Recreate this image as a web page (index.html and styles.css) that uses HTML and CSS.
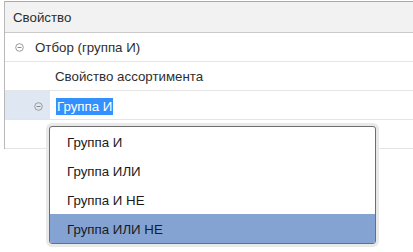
FILE: index.html
```html
<!DOCTYPE html>
<html lang="ru">
<head>
<meta charset="utf-8">
<link rel="stylesheet" href="styles.css">
</head>
<body>
<div class="page">
  <div class="grid">
    <div class="head">Свойство</div>
    <div class="row">
      <span class="toggle lvl0"><svg width="9" height="9" viewBox="0 0 9 9"><circle cx="4.5" cy="4.5" r="3.8" fill="none" stroke="#9a9a9a" stroke-width="1"/><line x1="2.5" y1="4.5" x2="6.5" y2="4.5" stroke="#8a8a8a" stroke-width="1"/></svg></span>
      <span class="label">Отбор (группа И)</span>
    </div>
    <div class="row">
      <span class="label indent1">Свойство ассортимента</span>
    </div>
    <div class="row current">
      <span class="cellbg"><span class="toggle lvl1"><svg width="9" height="9" viewBox="0 0 9 9"><circle cx="4.5" cy="4.5" r="3.8" fill="none" stroke="#9a9a9a" stroke-width="1"/><line x1="2.5" y1="4.5" x2="6.5" y2="4.5" stroke="#8a8a8a" stroke-width="1"/></svg></span></span>
      <span class="edit"><span class="sel">Группа И</span></span>
    </div>
    <div class="row"></div>
  </div>
  <ul class="dropdown">
    <li>Группа И</li>
    <li>Группа ИЛИ</li>
    <li>Группа И НЕ</li>
    <li class="hover">Группа ИЛИ НЕ</li>
  </ul>
</div>
</body>
</html>
```

FILE: styles.css
```css
html, body {
  margin: 0;
  padding: 0;
  background: #ffffff;
}
body {
  font-family: "Liberation Sans", Arial, sans-serif;
  font-size: 13.3px;
  color: #2e2e2e;
}
.page {
  position: relative;
  width: 413px;
  height: 252px;
  padding-top: 1px;
  box-sizing: border-box;
}
.grid {
  margin-left: 4px;
  border-left: 1px solid #b8b8b8;
}
.head {
  height: 30px;
  line-height: 31px;
  background: #f2f2f2;
  border-top: 1px solid #a9a9a9;
  border-bottom: 1px solid #cacaca;
  padding-left: 8px;
  color: #2e2e2e;
}
.row {
  height: 28px;
  border-bottom: 1px solid #e4e4e4;
  display: flex;
  align-items: center;
}
.toggle {
  display: flex;
  width: 9px;
  height: 9px;
}
.lvl0 {
  margin-left: 10px;
  margin-right: 11px;
}
.label {
  line-height: 16px;
  padding-top: 2px;
}
.indent1 {
  margin-left: 50px;
}
.current .cellbg {
  align-self: stretch;
  width: 45px;
  background: #dfe7f3;
  display: flex;
  align-items: center;
  justify-content: flex-end;
  padding-right: 7px;
  box-sizing: border-box;
  padding-top: 2px;
}
.edit {
  margin-left: 6px;
  padding-top: 2px;
}
.sel {
  background: #3390ff;
  color: #ffffff;
  padding: 1px 1px 1px 1px;
  line-height: 15px;
  display: inline-block;
}
.dropdown {
  position: absolute;
  left: 49px;
  top: 126px;
  width: 327px;
  margin: 0;
  padding: 0;
  list-style: none;
  background: #ffffff;
  border: 1px solid #6e6e6e;
  border-radius: 3px;
  box-shadow: 0 0 0 3px #e9e9e9;
  box-sizing: border-box;
  overflow: hidden;
}
.dropdown li {
  height: 29px;
  line-height: 31px;
  padding-left: 17px;
  color: #1a1a1a;
}
.dropdown li.hover {
  background: #84a3d3;
}
```
